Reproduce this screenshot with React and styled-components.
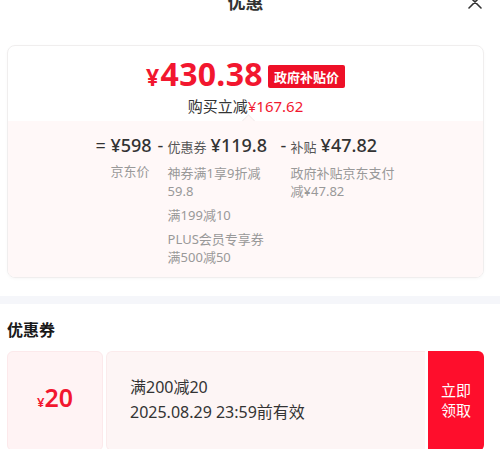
import React from 'react';
import styled, { createGlobalStyle } from 'styled-components';

const Global = createGlobalStyle`
  html, body { margin: 0; padding: 0; background: #fff; }
  body {
    font-family: "Noto Sans", "Noto Sans CJK SC", sans-serif;
    color: #333;
    overflow: hidden;
  }
`;

const RED = '#f2172f';

const Page = styled.div`
  width: 500px;
  height: 449px;
  overflow: hidden;
  background: #fff;
`;

const Section = styled.div`
  padding: 0 16px 0 7px;
`;

const Header = styled.div`
  margin-top: -20px;
  height: 44px;
  display: grid;
  grid-template-columns: 1fr auto 1fr;
  align-items: center;
`;

const Title = styled.div`
  grid-column: 2;
  font-size: 18px;
  font-weight: 700;
  color: #333;
  line-height: 44px;
`;

const CloseBtn = styled.div`
  grid-column: 3;
  justify-self: end;
  margin-right: 2px;
  width: 14px;
  height: 14px;
  display: flex;
`;

const Card = styled.div`
  margin-top: 21px;
  border: 1px solid #f0eeee;
  border-radius: 8px;
  overflow: hidden;
  box-shadow: 0 1px 3px rgba(0, 0, 0, 0.03);
`;

const PriceArea = styled.div`
  height: 75px;
  padding-top: 8px;
  box-sizing: border-box;
  display: flex;
  flex-direction: column;
  align-items: center;
`;

const PriceLine = styled.div`
  display: flex;
  align-items: center;
  height: 42px;
  gap: 5px;
`;

const BigPrice = styled.span`
  color: ${RED};
  font-size: 32px;
  font-weight: 700;
  line-height: 42px;
  letter-spacing: 0.3px;
`;

const BigYen = styled.span`
  font-size: 23px;
  margin-right: 1px;
`;

const Badge = styled.span`
  background: #ee1027;
  color: #fff;
  font-family: "Noto Sans CJK SC", sans-serif;
  font-size: 13px;
  font-weight: 700;
  line-height: 23px;
  padding: 0 6px;
  border-radius: 2px;
  margin-top: 2px;
`;

const SaveLine = styled.div`
  font-size: 15px;
  line-height: 20px;
  color: #333;
`;

const Red = styled.span`
  color: ${RED};
`;

const Breakdown = styled.div`
  position: relative;
  background: #fff8f8;
  padding: 12px 0 11px;
  display: flex;
  justify-content: center;
  gap: 6px;

  &::before {
    content: '';
    position: absolute;
    top: -5px;
    left: 50%;
    width: 8px;
    height: 8px;
    background: #fff8f8;
    border-top: 1px solid #f3eded;
    border-left: 1px solid #f3eded;
    transform: translateX(-2px) rotate(45deg);
  }
`;

const Item = styled.div`
  display: flex;
  align-items: flex-start;
`;

const Op = styled.span`
  width: ${(p) => p.$w}px;
  font-size: 18px;
  line-height: 24px;
  color: #333;
`;

const Block = styled.div`
  width: ${(p) => (p.$w ? `${p.$w}px` : 'auto')};
  display: flex;
  flex-direction: column;
`;

const Main = styled.div`
  display: flex;
  align-items: baseline;
  gap: 4px;
  line-height: 24px;
  white-space: nowrap;
`;

const Label = styled.span`
  font-size: 13px;
  color: #555;
`;

const Amount = styled.span`
  font-size: 18px;
  font-weight: 500;
  color: #333;
`;

const Subs = styled.div`
  margin-top: 5px;
  display: flex;
  flex-direction: column;
  gap: 6px;
`;

const Sub = styled.div`
  font-size: 13px;
  line-height: 18px;
  color: #999;
`;

const Band = styled.div`
  margin-top: 18px;
  height: 8px;
  background: #f5f6fa;
`;

const Heading = styled.div`
  margin-top: 14px;
  font-size: 16px;
  font-weight: 700;
  line-height: 24px;
  color: #1a1a1a;
`;

const Coupon = styled.div`
  margin-top: 9px;
  height: 100px;
  display: flex;
  gap: 3px;
`;

const CouponValue = styled.div`
  width: 96px;
  box-sizing: border-box;
  background: #fff3f4;
  border: 1px solid #fce9eb;
  border-radius: 6px;
  display: flex;
  align-items: baseline;
  justify-content: center;
  padding-top: 30px;
  color: ${RED};
`;

const SmallYen = styled.span`
  font-size: 13px;
  font-weight: 600;
`;

const ValueNum = styled.span`
  font-size: 25px;
  font-weight: 600;
  line-height: 30px;
`;

const CouponBody = styled.div`
  flex: 1;
  box-sizing: border-box;
  background: #fdf5f5;
  border: 1px solid #fbebec;
  border-right: none;
  border-radius: 6px 0 0 6px;
  padding-left: 23px;
  padding-bottom: 2px;
  display: flex;
  flex-direction: column;
  justify-content: center;
  font-size: 16px;
  line-height: 25px;
  color: #333;
`;

const TakeBtn = styled.div`
  width: 56px;
  background: #fe0e2c;
  border-radius: 0 6px 6px 0;
  color: #fff;
  font-family: "Noto Sans CJK SC", sans-serif;
  font-size: 15px;
  line-height: 20px;
  padding-bottom: 2px;
  display: flex;
  align-items: center;
  justify-content: center;
  text-align: center;
`;

export default function App() {
  return (
    <Page>
      <Global />
      <Section>
        <Header>
          <Title>优惠</Title>
          <CloseBtn>
            <svg width="14" height="14" viewBox="0 0 14 14">
              <path d="M1 1L13 13M13 1L1 13" stroke="#333" strokeWidth="1.6" strokeLinecap="round" fill="none" />
            </svg>
          </CloseBtn>
        </Header>
        <Card>
          <PriceArea>
            <PriceLine>
              <BigPrice>
                <BigYen>¥</BigYen>430.38
              </BigPrice>
              <Badge>政府补贴价</Badge>
            </PriceLine>
            <SaveLine>
              购买立减<Red>¥167.62</Red>
            </SaveLine>
          </PriceArea>
          <Breakdown>
            <Item>
              <Op $w={15}>=</Op>
              <Block>
                <Main>
                  <Amount>¥598</Amount>
                </Main>
                <Subs>
                  <Sub>京东价</Sub>
                </Subs>
              </Block>
            </Item>
            <Item>
              <Op $w={10}>-</Op>
              <Block $w={107}>
                <Main>
                  <Label>优惠券</Label>
                  <Amount>¥119.8</Amount>
                </Main>
                <Subs>
                  <Sub>神券满1享9折减59.8</Sub>
                  <Sub>满199减10</Sub>
                  <Sub>PLUS会员专享券满500减50</Sub>
                </Subs>
              </Block>
            </Item>
            <Item>
              <Op $w={10}>-</Op>
              <Block $w={105}>
                <Main>
                  <Label>补贴</Label>
                  <Amount>¥47.82</Amount>
                </Main>
                <Subs>
                  <Sub>政府补贴京东支付减¥47.82</Sub>
                </Subs>
              </Block>
            </Item>
          </Breakdown>
        </Card>
      </Section>
      <Band />
      <Section>
        <Heading>优惠券</Heading>
        <Coupon>
          <CouponValue>
            <SmallYen>¥</SmallYen>
            <ValueNum>20</ValueNum>
          </CouponValue>
          <CouponBody>
            <div>满200减20</div>
            <div>2025.08.29 23:59前有效</div>
          </CouponBody>
          <TakeBtn>
            立即
            <br />
            领取
          </TakeBtn>
        </Coupon>
      </Section>
    </Page>
  );
}
